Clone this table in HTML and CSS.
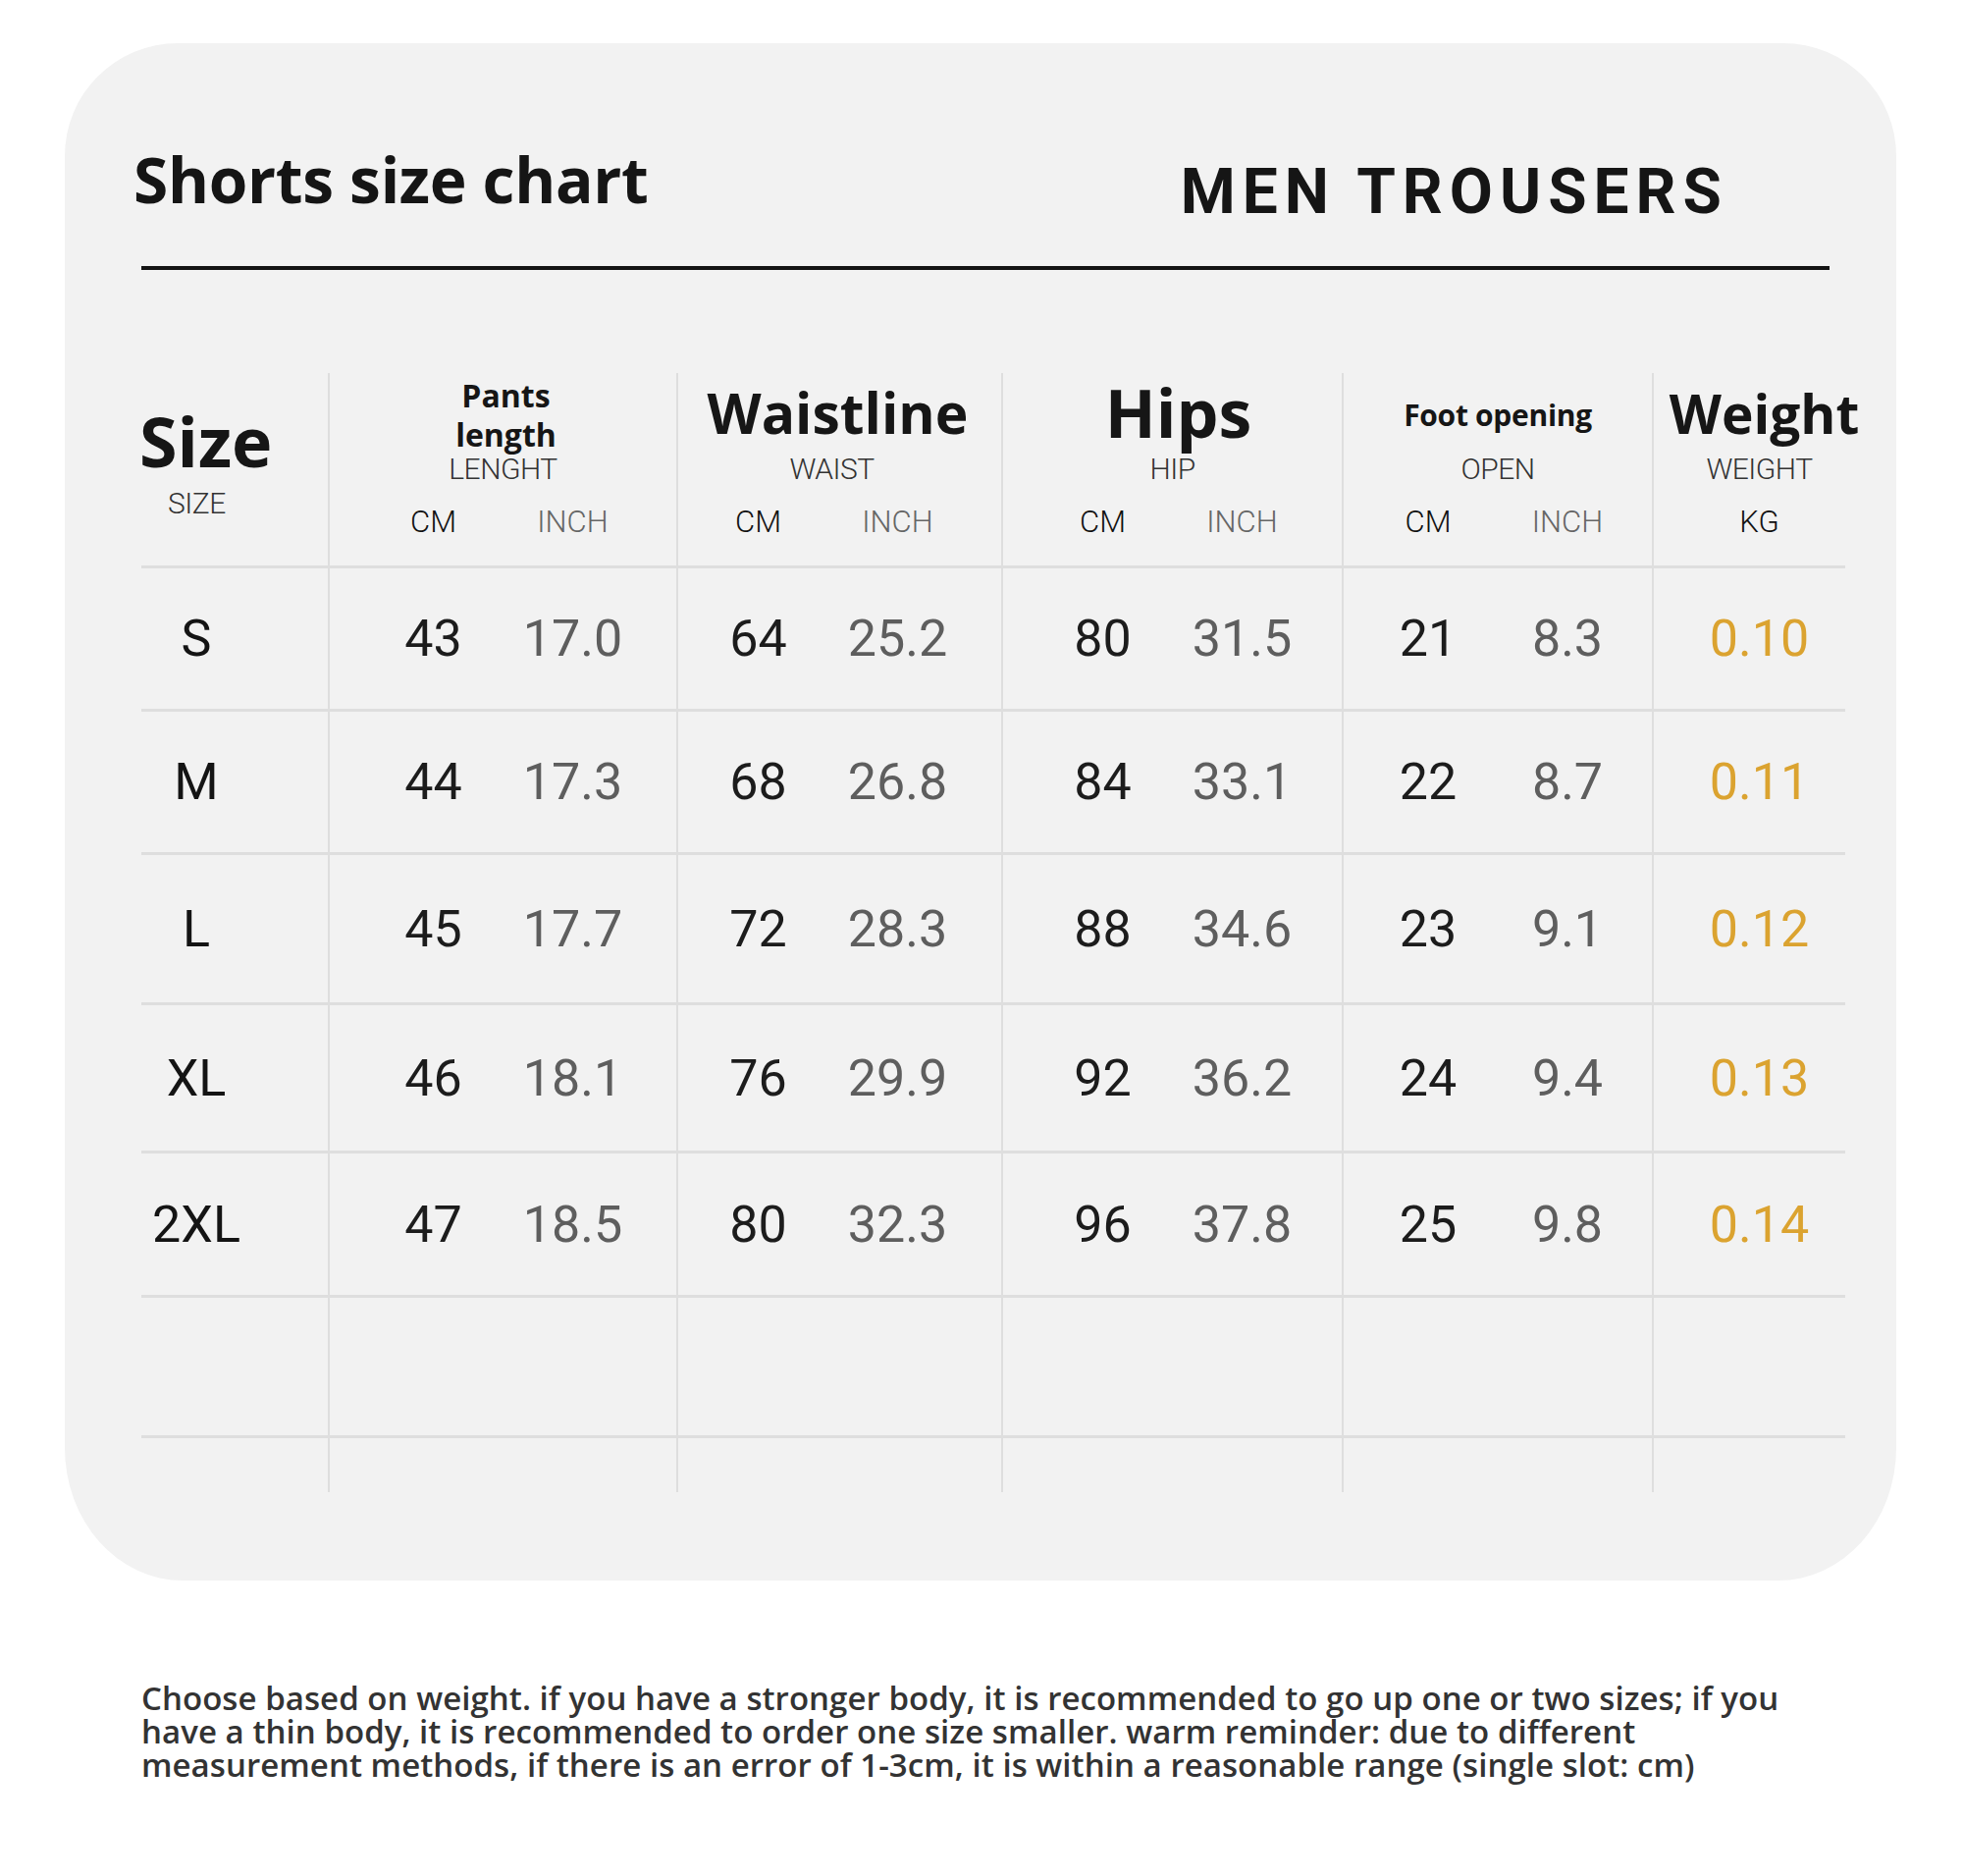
FILE: index.html
```html
<!DOCTYPE html>
<html lang="en">
<head>
<meta charset="utf-8">
<title>Shorts size chart</title>
<link rel="stylesheet" href="styles.css">
</head>
<body>
<main class="page">
  <section class="card">
    <header class="card-head">
      <h1 class="title">Shorts size chart</h1>
      <div class="brand">MEN TROUSERS</div>
    </header>
    <div class="rule"></div>
    <div class="chart">
      <div class="row row-head">
        <div class="cell c-size head-size">
          <div class="t-size">Size</div>
          <div class="sub sub-size">SIZE</div>
        </div>
        <div class="cell c-pants head">
          <div class="t t-pants">Pants<br>length</div>
          <div class="sub">LENGHT</div>
          <div class="pair units"><span class="v">CM</span><span class="v in">INCH</span></div>
        </div>
        <div class="cell c-waist head">
          <div class="t t-waist">Waistline</div>
          <div class="sub sub-waist">WAIST</div>
          <div class="pair units"><span class="v">CM</span><span class="v in">INCH</span></div>
        </div>
        <div class="cell c-hips head">
          <div class="t t-hips">Hips</div>
          <div class="sub">HIP</div>
          <div class="pair units"><span class="v">CM</span><span class="v in">INCH</span></div>
        </div>
        <div class="cell c-foot head">
          <div class="t t-foot">Foot opening</div>
          <div class="sub">OPEN</div>
          <div class="pair units"><span class="v">CM</span><span class="v in">INCH</span></div>
        </div>
        <div class="cell c-weight head">
          <div class="t t-weight">Weight</div>
          <div class="sub">WEIGHT</div>
          <div class="pair units"><span class="v">KG</span></div>
        </div>
      </div>

      <div class="row">
        <div class="cell c-size"><span class="sz">S</span></div>
        <div class="cell c-pants"><div class="pair"><span class="v">43</span><span class="v in">17.0</span></div></div>
        <div class="cell c-waist"><div class="pair"><span class="v">64</span><span class="v in">25.2</span></div></div>
        <div class="cell c-hips"><div class="pair"><span class="v">80</span><span class="v in">31.5</span></div></div>
        <div class="cell c-foot"><div class="pair"><span class="v">21</span><span class="v in">8.3</span></div></div>
        <div class="cell c-weight"><span class="kg">0.10</span></div>
      </div>
      <div class="row">
        <div class="cell c-size"><span class="sz">M</span></div>
        <div class="cell c-pants"><div class="pair"><span class="v">44</span><span class="v in">17.3</span></div></div>
        <div class="cell c-waist"><div class="pair"><span class="v">68</span><span class="v in">26.8</span></div></div>
        <div class="cell c-hips"><div class="pair"><span class="v">84</span><span class="v in">33.1</span></div></div>
        <div class="cell c-foot"><div class="pair"><span class="v">22</span><span class="v in">8.7</span></div></div>
        <div class="cell c-weight"><span class="kg">0.11</span></div>
      </div>
      <div class="row">
        <div class="cell c-size"><span class="sz">L</span></div>
        <div class="cell c-pants"><div class="pair"><span class="v">45</span><span class="v in">17.7</span></div></div>
        <div class="cell c-waist"><div class="pair"><span class="v">72</span><span class="v in">28.3</span></div></div>
        <div class="cell c-hips"><div class="pair"><span class="v">88</span><span class="v in">34.6</span></div></div>
        <div class="cell c-foot"><div class="pair"><span class="v">23</span><span class="v in">9.1</span></div></div>
        <div class="cell c-weight"><span class="kg">0.12</span></div>
      </div>
      <div class="row">
        <div class="cell c-size"><span class="sz">XL</span></div>
        <div class="cell c-pants"><div class="pair"><span class="v">46</span><span class="v in">18.1</span></div></div>
        <div class="cell c-waist"><div class="pair"><span class="v">76</span><span class="v in">29.9</span></div></div>
        <div class="cell c-hips"><div class="pair"><span class="v">92</span><span class="v in">36.2</span></div></div>
        <div class="cell c-foot"><div class="pair"><span class="v">24</span><span class="v in">9.4</span></div></div>
        <div class="cell c-weight"><span class="kg">0.13</span></div>
      </div>
      <div class="row">
        <div class="cell c-size"><span class="sz">2XL</span></div>
        <div class="cell c-pants"><div class="pair"><span class="v">47</span><span class="v in">18.5</span></div></div>
        <div class="cell c-waist"><div class="pair"><span class="v">80</span><span class="v in">32.3</span></div></div>
        <div class="cell c-hips"><div class="pair"><span class="v">96</span><span class="v in">37.8</span></div></div>
        <div class="cell c-foot"><div class="pair"><span class="v">25</span><span class="v in">9.8</span></div></div>
        <div class="cell c-weight"><span class="kg">0.14</span></div>
      </div>
      <div class="row row-empty">
        <div class="cell c-size"></div>
        <div class="cell c-pants"></div>
        <div class="cell c-waist"></div>
        <div class="cell c-hips"></div>
        <div class="cell c-foot"></div>
        <div class="cell c-weight"></div>
      </div>
      <div class="row row-tail">
        <div class="cell c-size"></div>
        <div class="cell c-pants"></div>
        <div class="cell c-waist"></div>
        <div class="cell c-hips"></div>
        <div class="cell c-foot"></div>
        <div class="cell c-weight"></div>
      </div>
    </div>
  </section>
  <p class="note">Choose based on weight. if you have a stronger body, it is recommended to go up one or two sizes; if you<br>have a thin body, it is recommended to order one size smaller. warm reminder: due to different<br>measurement methods, if there is an error of 1-3cm, it is within a reasonable range (single slot: cm)</p>
</main>
</body>
</html>
```

FILE: styles.css
```css
html, body {
  margin: 0;
  padding: 0;
  background: #ffffff;
}

.page {
  width: 2000px;
  height: 1911px;
  overflow: hidden;
  padding-top: 44px;
  box-sizing: border-box;
}

.card {
  margin-left: 66px;
  width: 1866px;
  height: 1566px;
  box-sizing: border-box;
  background: #f2f2f2;
  border-radius: 115px 115px 120px 120px / 115px 115px 135px 135px;
  padding-top: 106px;
}

.card-head {
  display: flex;
  justify-content: space-between;
  align-items: flex-start;
  padding: 0 171px 0 70px;
}

.title {
  margin: 0;
  font-family: "Open Sans", "Noto Sans", sans-serif;
  font-weight: 700;
  font-size: 64px;
  line-height: 65px;
  color: #151515;
  letter-spacing: -0.3px;
}

.brand {
  margin-top: 13px;
  font-family: Roboto, "Liberation Sans", sans-serif;
  font-weight: 700;
  font-size: 64px;
  line-height: 66px;
  letter-spacing: 7px;
  color: #151515;
}

.rule {
  margin: 42px 68px 0 78px;
  height: 4px;
  background: #141414;
}

.chart {
  margin: 105px 52px 0 78px;
}

.row {
  display: grid;
  grid-template-columns: 190px 355px 331px 347px 316px 197px;
  height: 148px;
  box-sizing: border-box;
  border-bottom: 3px solid #dedede;
}

.row-head { height: 199px; }
.row:nth-child(2) { height: 146px; }
.row:nth-child(3) { height: 146px; }
.row:nth-child(4) { height: 153px; }
.row:nth-child(5) { height: 151px; }
.row:nth-child(6) { height: 147px; }
.row-empty { height: 143px; }
.row-tail { height: 55px; border-bottom: none; }

.cell {
  display: flex;
  align-items: center;
  justify-content: center;
  box-sizing: border-box;
  border-left: 2px solid #dedede;
  font-family: Roboto, "Liberation Sans", sans-serif;
  font-size: 52px;
  color: #1c1c1c;
}

.c-size {
  border-left: none;
  padding-right: 78px;
}

.c-waist { padding-right: 24px; }
.c-weight { padding-left: 20px; }

.pair {
  display: flex;
}

.v {
  width: 142px;
  text-align: center;
}

.in { color: #5e5e5e; }

.kg { color: #dba330; }

.sz { color: #141414; }

/* header */
.head {
  flex-direction: column;
  justify-content: flex-end;
  padding-bottom: 29px;
}

.head-size {
  flex-direction: column;
  justify-content: flex-end;
  align-items: flex-start;
  padding-bottom: 48px;
}

.t-size {
  font-family: "Open Sans", "Noto Sans", sans-serif;
  font-weight: 700;
  font-size: 70px;
  line-height: 67px;
  color: #161616;
  margin-bottom: 15px;
  margin-left: -2px;
}

.sub-size {
  margin-left: 27px;
}

.t {
  font-family: "Open Sans", "Noto Sans", sans-serif;
  font-weight: 700;
  color: #161616;
  text-align: center;
  white-space: nowrap;
}

.t-pants {
  font-size: 32px;
  line-height: 40px;
  margin-bottom: 0;
  margin-left: 6px;
}

.t-waist {
  font-size: 57px;
  line-height: 56px;
  margin-bottom: 15px;
  margin-left: 20px;
}

.sub-waist {
  margin-left: 8px;
}

.t-hips {
  font-size: 68px;
  line-height: 60px;
  margin-bottom: 13px;
  margin-left: 12px;
}

.t-foot {
  font-size: 30px;
  line-height: 30px;
  margin-bottom: 25px;
  letter-spacing: -0.3px;
}

.t-weight {
  font-size: 55px;
  line-height: 55px;
  margin-bottom: 15px;
  margin-left: 10px;
}

.sub {
  font-family: Roboto, "Liberation Sans", sans-serif;
  font-weight: 300;
  font-size: 30px;
  line-height: 30px;
  color: #333333;
  letter-spacing: -0.5px;
}

.units {
  margin-top: 23px;
  font-size: 31px;
  line-height: 31px;
  font-weight: 300;
  color: #111111;
}

.units .in { color: #666666; }

.note {
  margin: 103px 0 0 0;
  padding-left: 144px;
  font-family: "Open Sans", "Noto Sans", sans-serif;
  font-weight: 600;
  font-size: 33px;
  line-height: 34px;
  font-stretch: 92%;
  letter-spacing: 0.05px;
  color: #333333;
  white-space: nowrap;
}
```
